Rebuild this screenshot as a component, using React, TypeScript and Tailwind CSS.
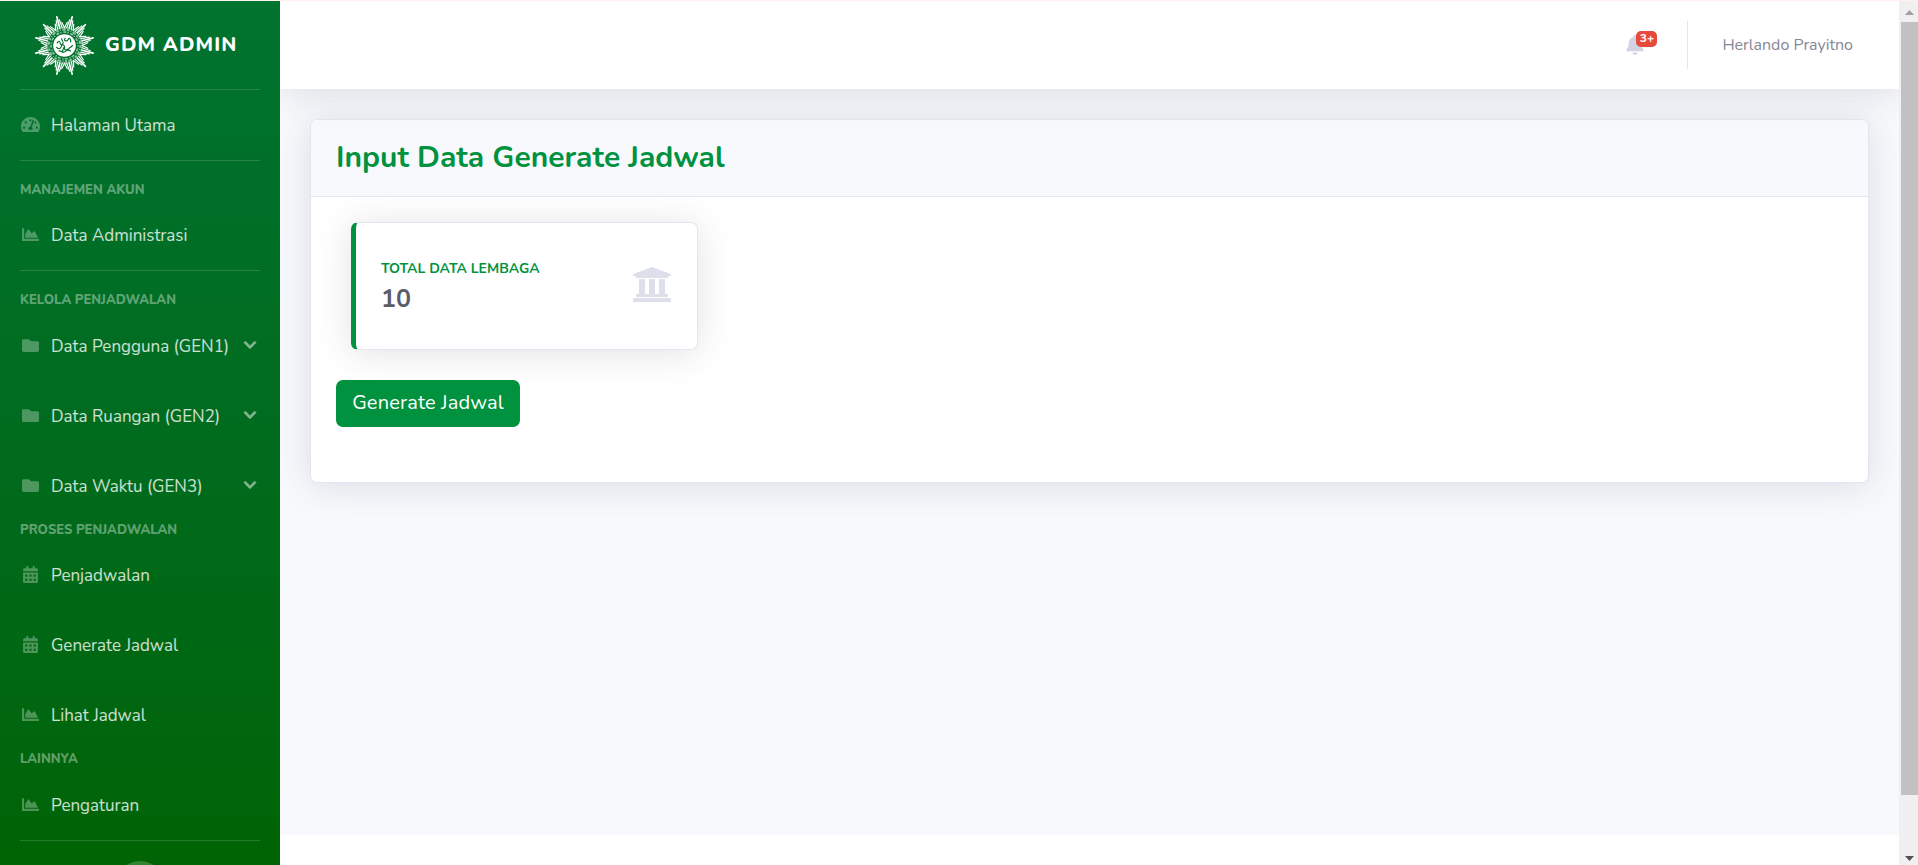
import type { ComponentType, ReactNode } from 'react';
import {
  FaBell,
  FaCalendarAlt,
  FaChartArea,
  FaChevronDown,
  FaFolder,
  FaTachometerAlt,
} from 'react-icons/fa';

type Icon = ComponentType<{ className?: string }>;

const RAYS = Array.from({ length: 12 }, (_, i) => 15 + i * 30);

function Logo() {
  return (
    <svg viewBox="-50 -50 100 100" className="h-[61px] w-[61px] shrink-0" aria-hidden="true">
      {RAYS.map((angle) => (
        <g key={angle} transform={`rotate(${angle})`} stroke="#fff" strokeLinecap="round" fill="none">
          <path d="M0-48.500V-30" strokeWidth="2.8" />
          <path d="M-2.6-43L-4-29M2.6-43L4-29" strokeWidth="1.9" />
          <path d="M-5.4-38L-7.6-28M5.4-38L7.6-28" strokeWidth="1.9" />
        </g>
      ))}
      <circle r="29" fill="none" stroke="#fff" strokeOpacity=".6" strokeWidth="1.5" />
      <circle r="26" fill="none" stroke="#fff" strokeOpacity=".55" strokeWidth="3.5" strokeDasharray="4 2 1.5 2.5 6 2" />
      <circle r="22" fill="none" stroke="#fff" strokeOpacity=".6" strokeWidth="2.5" strokeDasharray="2 3 5 2" />
      <circle r="18.5" fill="#fff" />
      <g fill="none" stroke="#00732e" strokeWidth="1.9" strokeLinecap="round">
        <path d="M-12-4c2-4 4-4 5 0s4 3 5-1M1-12c-3 5 3 6 5 2s5 0 4 4" />
        <path d="M-13 3c4 4 7 2 8-2s6-2 5 3 7 4 9-1" />
        <path d="M-9 9c4-1 6 4 10 1s5-3 9-1M-5-11l2 4M10 3l3-3M-1 3l-3 8" />
      </g>
    </svg>
  );
}

function Rule() {
  return <hr className="mx-5 h-px shrink-0 border-0 bg-white/15" />;
}

function Heading({ children, spaced = false }: { children: ReactNode; spaced?: boolean }) {
  return (
    <div
      className={`shrink-0 px-5 text-[13px] font-extrabold text-white/40 uppercase ${spaced ? 'pt-[19px] leading-5' : 'pb-[2px] leading-[18px]'}`}
    >
      {children}
    </div>
  );
}

function NavItem({
  icon: Glyph,
  label,
  wide = false,
  collapsible = false,
}: {
  icon: Icon;
  label: string;
  wide?: boolean;
  collapsible?: boolean;
}) {
  return (
    <a className="flex h-[70px] shrink-0 items-center px-5 text-[17px] text-white/80">
      <span className="flex w-[21px] justify-center pb-px">
        <Glyph className={`h-[17px] text-white/30 ${wide ? 'w-[19px]' : 'w-[17px]'}`} />
      </span>
      <span className="ml-[10px] pt-px leading-6 whitespace-nowrap">{label}</span>
      {collapsible && (
        <FaChevronDown className="mr-[3px] mb-[2px] ml-auto h-[14px] w-[14px] overflow-visible stroke-current stroke-[24] text-white opacity-50" />
      )}
    </a>
  );
}

function Sidebar() {
  return (
    <aside className="flex w-[280px] shrink-0 flex-col overflow-hidden bg-linear-to-b from-[#00732f] to-[#006404]">
      <div className="flex h-[88px] shrink-0 items-center pl-[34px]">
        <Logo />
        <span className="ml-[10px] pb-px text-[20px] leading-[30px] font-extrabold tracking-[1.1px] text-white uppercase">
          GDM Admin
        </span>
      </div>
      <Rule />
      <NavItem icon={FaTachometerAlt} label="Halaman Utama" wide />
      <Rule />
      <Heading spaced>Manajemen Akun</Heading>
      <NavItem icon={FaChartArea} label="Data Administrasi" />
      <Rule />
      <Heading spaced>Kelola Penjadwalan</Heading>
      <div className="shrink-0 pt-px">
        <NavItem icon={FaFolder} label="Data Pengguna (GEN1)" collapsible />
        <NavItem icon={FaFolder} label="Data Ruangan (GEN2)" collapsible />
        <NavItem icon={FaFolder} label="Data Waktu (GEN3)" collapsible />
      </div>
      <Heading>Proses Penjadwalan</Heading>
      <div className="-mt-px shrink-0">
        <NavItem icon={FaCalendarAlt} label="Penjadwalan" />
        <NavItem icon={FaCalendarAlt} label="Generate Jadwal" />
        <NavItem icon={FaChartArea} label="Lihat Jadwal" />
      </div>
      <Heading>Lainnya</Heading>
      <NavItem icon={FaChartArea} label="Pengaturan" />
      <Rule />
      <button className="mx-auto mt-5 h-[50px] w-[50px] shrink-0 rounded-full bg-white/20" aria-label="Toggle" />
    </aside>
  );
}

function Topbar() {
  return (
    <header className="z-10 flex h-[88px] shrink-0 items-center justify-end bg-white pr-[46px] shadow-[0_3px_35px_0_rgba(58,59,69,0.15)]">
      <div className="relative mr-[43px] h-5 w-[18px]">
        <FaBell className="h-5 w-[18px] text-[#d1d3e2]" />
        <span className="absolute -top-[4px] left-[10px] h-4 w-[21px] rounded-[5px] bg-[#e74a3b] text-center text-[12px] leading-[15px] font-bold text-white">
          3+
        </span>
      </div>
      <div className="h-12 w-px bg-[#e3e6f0]" />
      <span className="ml-[34px] text-[16px] leading-6 text-[#858796]">Herlando Prayitno</span>
    </header>
  );
}

function BankIcon() {
  return (
    <svg viewBox="0 0 38 36" className="mr-px mb-[3px] h-9 w-[38px] fill-[#dddfeb]" aria-hidden="true">
      <path d="M19 0L37 6.800Q38 7.200 38 8V9H35V11H3V9H0V8Q0 7.200 1 6.800Z" />
      <path d="M6 12H12V27H16V12H22V27H26V12H32V27H35V30H3V27H6Z" />
      <path d="M1.500 31H36.500Q38 31 38 32.500V35H0V32.500Q0 31 1.500 31Z" />
    </svg>
  );
}

function StatCard() {
  return (
    <div className="ml-[15px] flex h-[128px] w-[347px] items-center justify-between rounded-[7px] border border-l-[5px] border-[#e3e6f0] border-l-[#00923f] bg-white px-[25px] shadow-[0_3px_35px_0_rgba(58,59,69,0.15)]">
      <div className="pb-px">
        <div className="text-[14px] leading-[21px] font-bold text-[#00923f] uppercase">Total Data Lembaga</div>
        <div className="mt-[5px] text-[25px] leading-[30px] font-bold text-[#5a5c69]">10</div>
      </div>
      <BankIcon />
    </div>
  );
}

function Scrollbar() {
  return (
    <div className="flex w-[19px] shrink-0 flex-col bg-[#f0f0f0] pl-[2px]">
      <div className="flex h-[21px] shrink-0 items-center justify-center">
        <svg viewBox="0 0 9 5" className="mt-[2px] h-[5px] w-[9px] fill-[#a0a0a0]">
          <path d="M0 5L4.500 0L9 5Z" />
        </svg>
      </div>
      <div className="h-[773px] shrink-0 bg-[#c1c1c1]" />
      <div className="flex grow items-end justify-center pb-1">
        <svg viewBox="0 0 9 5" className="h-[5px] w-[9px] fill-[#505050]">
          <path d="M0 0L4.500 5L9 0Z" />
        </svg>
      </div>
    </div>
  );
}

export default function App() {
  return (
    <div className="flex h-[865px] w-[1918px] flex-col overflow-hidden bg-white font-[Nunito,'Open_Sans',sans-serif]">
      <div className="h-px shrink-0 bg-[#fff1ed]" />
      <div className="flex min-h-0 grow">
        <Sidebar />
        <div className="flex min-w-0 grow flex-col overflow-hidden">
          <Topbar />
          <main className="h-[746px] shrink-0 bg-[#f8f9fd] px-[30px] pt-[30px]">
            <section className="h-[364px] rounded-[7px] border border-[#e3e6f0] bg-white shadow-[0_3px_35px_0_rgba(58,59,69,0.15)]">
              <div className="h-[77px] rounded-t-[6px] border-b border-[#e3e6f0] bg-[#f8f9fd] px-[25px] pt-[20px]">
                <h1 className="text-[30px] leading-9 font-bold text-[#00923f]">Input Data Generate Jadwal</h1>
              </div>
              <div className="px-[25px] pt-[25px]">
                <StatCard />
                <button className="mt-[30px] h-[47px] w-[184px] rounded-[7px] bg-[#00923f] pb-[2px] text-[20px] leading-[30px] tracking-[0.15px] whitespace-nowrap text-white">
                  Generate Jadwal
                </button>
              </div>
            </section>
          </main>
        </div>
        <Scrollbar />
      </div>
    </div>
  );
}
